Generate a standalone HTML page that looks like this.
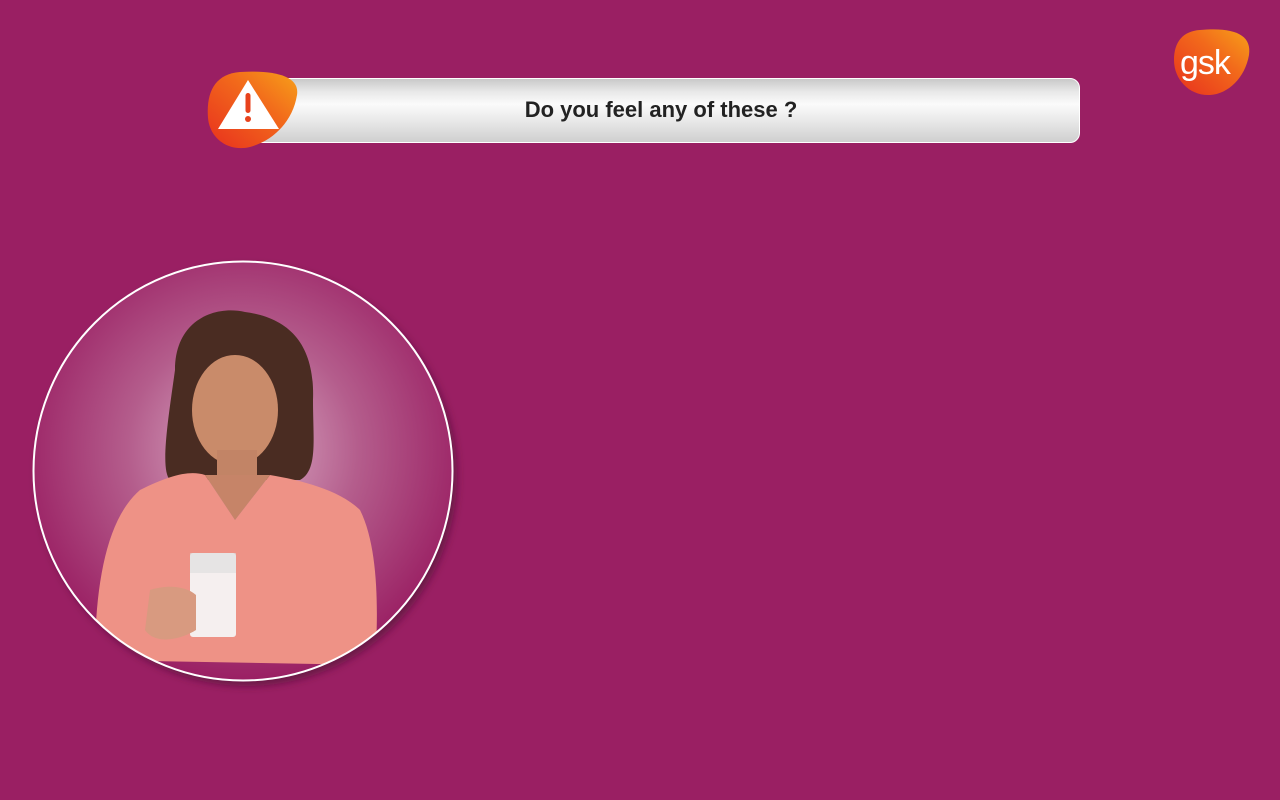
<!DOCTYPE html>
<html><head><meta charset="utf-8"><style>
html,body{margin:0;padding:0;width:1280px;height:800px;overflow:hidden;background:#9a1f63;font-family:"Liberation Sans",sans-serif}
.bar{position:absolute;left:250px;top:78px;width:830px;height:65px;border-radius:10px;border:1px solid #fff;box-sizing:border-box;
background:linear-gradient(#c9c9c9 0%,#e8e8e8 20%,#fbfbfb 40%,#e6e6e6 70%,#cfcfcf 100%)}
.bar span{position:absolute;left:0;right:0;top:18px;text-align:center;font-weight:bold;font-size:22px;color:#222;padding-right:8px}
</style></head><body>
<div class="bar"><span>Do you feel any of these ?</span></div>
<svg style="position:absolute;left:0;top:0" width="1280" height="800">
<defs>
<linearGradient id="og" x1="0" y1="1" x2="1" y2="0"><stop offset="0" stop-color="#e8301e"/><stop offset="0.6" stop-color="#f26a1b"/><stop offset="1" stop-color="#f7a11a"/></linearGradient>
<radialGradient id="cg" cx="0.5" cy="0.45" r="0.55"><stop offset="0" stop-color="#dcb0c8"/><stop offset="0.5" stop-color="#b45d8c"/><stop offset="1" stop-color="#9a1f63"/></radialGradient>
<clipPath id="cc"><circle cx="243" cy="471" r="209"/></clipPath>
<filter id="sh"><feDropShadow dx="4" dy="5" stdDeviation="4" flood-color="#4a0830" flood-opacity="0.6"/></filter>
</defs>
<path d="M240 72 C275 70 300 76 297 95 C293 120 275 140 250 147 C230 152 210 140 208 118 C206 92 215 74 240 72Z" fill="url(#og)"/>
<path d="M248 80 L279 129 L218 129 Z" fill="#fff"/>
<rect x="245.5" y="93" width="5" height="20" rx="2.5" fill="#e8421c"/><circle cx="248" cy="119" r="3" fill="#e8421c"/>
<path d="M1200 30 C1235 27 1252 35 1249 55 C1245 78 1228 94 1210 95 C1190 96 1174 80 1174 60 C1174 42 1183 31 1200 30Z" fill="url(#og)"/>
<text x="1180" y="74" font-family="Liberation Sans,sans-serif" font-size="34" fill="#fff" letter-spacing="-1">gsk</text>
<circle cx="243" cy="471" r="210" fill="#9a1f63" filter="url(#sh)"/>
<g clip-path="url(#cc)">
<circle cx="243" cy="471" r="210" fill="url(#cg)"/>
<path d="M175 370 C175 320 215 305 245 312 C290 318 315 345 313 400 C313 440 318 470 300 480 L170 480 C160 470 168 420 175 370Z" fill="#4a2c22"/>
<ellipse cx="235" cy="410" rx="43" ry="55" fill="#c98b6a"/>
<rect x="217" y="450" width="40" height="35" fill="#c28466"/>
<path d="M95 660 C95 590 105 520 140 490 C170 475 190 470 205 475 L235 520 L270 475 C300 480 340 490 360 510 C380 550 378 620 375 665 Z" fill="#ee9286"/>
<path d="M205 475 L235 520 L270 475 Z" fill="#c68468"/>
<rect x="190" y="553" width="46" height="84" rx="3" fill="#f4f4f4" opacity="0.95"/>
<rect x="190" y="553" width="46" height="20" fill="#dcdcdc" opacity="0.6"/>
<path d="M150 590 C165 585 185 585 196 595 L196 630 C180 640 155 645 145 630 Z" fill="#d89a80"/>
</g>
<circle cx="243" cy="471" r="209.5" fill="none" stroke="#fff" stroke-width="2"/>
</svg>
</body></html>
